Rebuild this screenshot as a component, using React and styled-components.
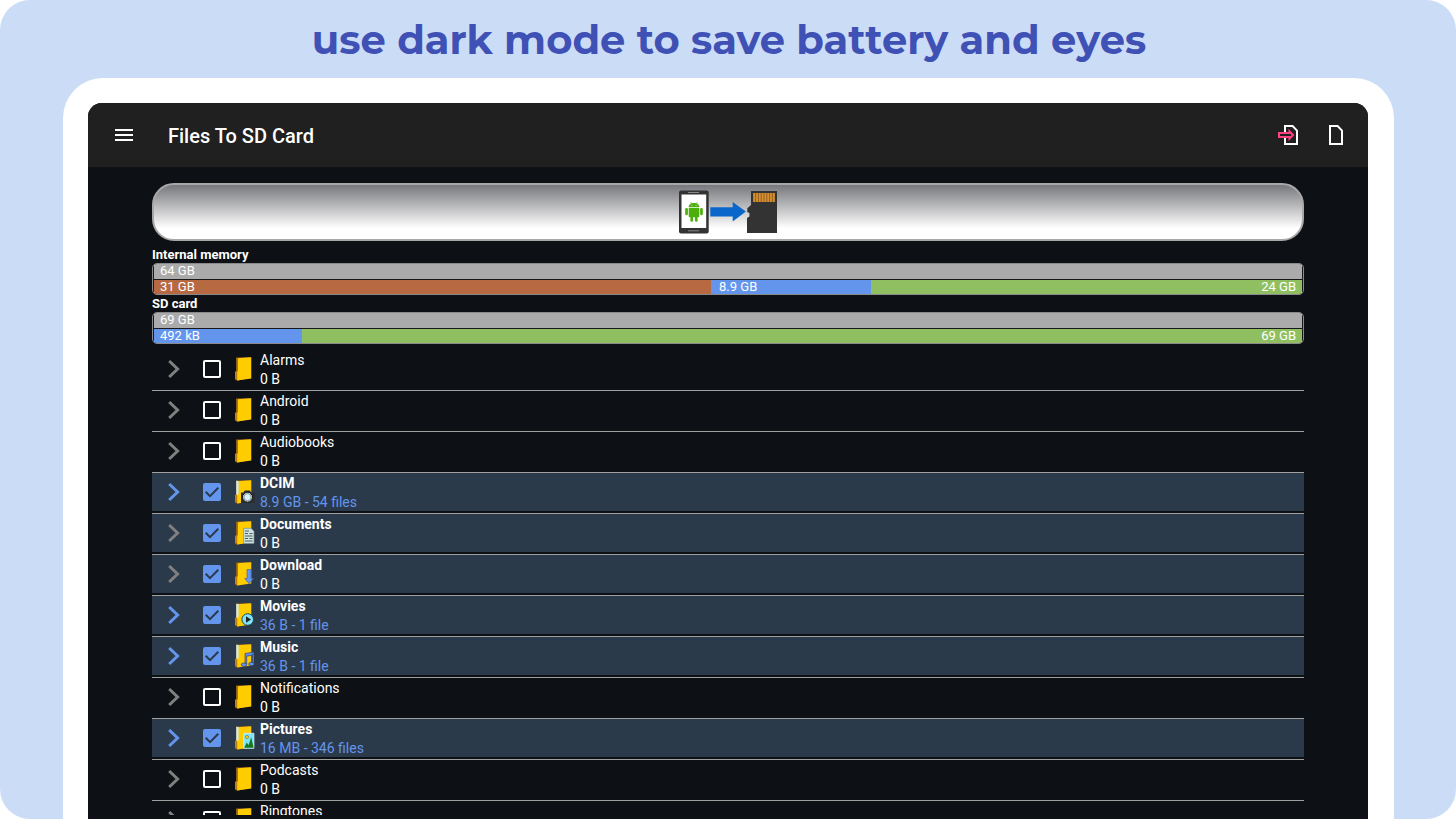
import { useState } from "react";
import styled, { createGlobalStyle } from "styled-components";

const GlobalStyle = createGlobalStyle`
  * {
    box-sizing: border-box;
  }

  body {
    margin: 0;
    background-color: white;
    font-family: Roboto, "Liberation Sans", sans-serif;
  }
`;

const Page = styled.div`
  display: flex;
  flex-direction: column;
  height: 100vh;
  overflow: hidden;
  border-radius: 30px;
  background-color: #cbdcf6;
`;

const Headline = styled.h1`
  display: flex;
  align-items: center;
  justify-content: center;
  flex: none;
  height: 78px;
  margin: 0;
  padding-left: 2px;
  color: #3f51b5;
  font-family: Montserrat, Inter, sans-serif;
  font-size: 40px;
  font-weight: 700;
  white-space: nowrap;
`;

const Tablet = styled.div`
  display: flex;
  flex: 1;
  min-height: 0;
  margin: 0 62px 0 63px;
  padding: 25px 26px 0 25px;
  border-radius: 40px 40px 0 0;
  background-color: white;
`;

const Screen = styled.div`
  display: flex;
  flex-direction: column;
  flex: 1;
  min-width: 0;
  padding-bottom: 4px;
  overflow: hidden;
  border-radius: 14px 14px 0 0;
  background-color: #0d1014;
  color: white;
`;

const AppBar = styled.header`
  display: flex;
  align-items: center;
  flex: none;
  height: 64px;
  padding: 0 20px 0 24px;
  background-color: #202020;
`;

const AppTitle = styled.h2`
  flex: 1;
  margin: 0 0 0 32px;
  padding-top: 2px;
  font-size: 20px;
  line-height: 24px;
  font-weight: 500;
`;

const Actions = styled.div`
  display: flex;
  gap: 24px;
`;

const IconButton = styled.button`
  display: flex;
  align-items: center;
  justify-content: center;
  padding: 0;
  border: none;
  background: none;
  color: ${({ $color }) => $color || "white"};
  cursor: pointer;
`;

const Content = styled.main`
  display: flex;
  flex-direction: column;
  flex: 1;
  min-height: 0;
  padding: 16px 64px 0;
`;

const TransferButton = styled.button`
  display: flex;
  align-items: center;
  justify-content: center;
  flex: none;
  height: 58px;
  margin-bottom: 6px;
  padding: 0;
  border: 2px solid #a8a8a8;
  border-radius: 22px;
  background: linear-gradient(#77787c, #ffffff 80%);
  cursor: pointer;
`;

const StorageLabel = styled.h3`
  flex: none;
  margin: 0;
  font-size: 13px;
  line-height: 16px;
  font-weight: 700;
`;

const Storage = styled.div`
  flex: none;
  height: 32px;
  margin-bottom: ${({ $last }) => ($last ? "6px" : "1px")};
  padding: 0 1px;
  overflow: hidden;
  border: 1px solid #8a8a8a;
  border-radius: 5px;
  background-color: #17181a;
`;

const StorageBar = styled.div`
  display: grid;
  grid-template-columns: ${({ $columns }) => $columns};
  height: 15px;
  font-size: 13px;
  line-height: 14px;

  & + & {
    margin-top: 1px;
    height: 14px;
  }
`;

const Segment = styled.div`
  padding: 0 6px;
  background-color: ${({ $color }) => $color};
  text-align: ${({ $end }) => ($end ? "right" : "left")};

  & + & {
    padding-left: 8px;
  }
`;

const FileList = styled.ul`
  flex: 1;
  min-height: 0;
  margin: 0;
  padding: 0;
  overflow: hidden;
  list-style: none;
`;

const FileRow = styled.li`
  padding-bottom: 2px;
  border-bottom: 1px solid #a0a0a0;
`;

const FileRowBody = styled.div`
  display: grid;
  grid-template-columns: 44px 32px 32px 1fr;
  grid-template-rows: 38px;
  align-items: center;
  justify-items: center;
  background-color: ${({ $selected }) => ($selected ? "#2b3a4b" : "transparent")};
`;

const CheckboxWrap = styled.span`
  display: grid;
  place-items: center;

  > * {
    grid-area: 1 / 1;
  }
`;

const Checkbox = styled.input`
  appearance: none;
  width: 18px;
  height: 18px;
  margin: 0;
  border: 2px solid white;
  border-radius: 2px;
  cursor: pointer;

  &:checked {
    border-color: #6495ed;
    background-color: #6495ed;
  }
`;

const CheckMark = styled.svg`
  pointer-events: none;
`;

const FileLabel = styled.label`
  justify-self: start;
  align-self: start;
  padding-top: 1px;
  font-size: 14px;
  line-height: 19px;
  cursor: pointer;
`;

const FileName = styled.span`
  display: block;
  font-weight: ${({ $selected }) => ($selected ? 700 : 400)};
`;

const FileInfo = styled.span`
  display: block;
  color: ${({ $filled }) => ($filled ? "#6495ed" : "white")};
`;

const storages = [
  {
    label: "Internal memory",
    total: "64 GB",
    columns: "558fr 160fr 432fr",
    parts: [
      { text: "31 GB", color: "#b76a42" },
      { text: "8.9 GB", color: "#6495ed" },
      { text: "24 GB", color: "#8fbf61", end: true },
    ],
  },
  {
    label: "SD card",
    total: "69 GB",
    columns: "148fr 1002fr",
    parts: [
      { text: "492 kB", color: "#6495ed" },
      { text: "69 GB", color: "#8fbf61", end: true },
    ],
  },
];

const folders = [
  { name: "Alarms", info: "0 B" },
  { name: "Android", info: "0 B" },
  { name: "Audiobooks", info: "0 B" },
  { name: "DCIM", info: "8.9 GB - 54 files", selected: true, filled: true },
  { name: "Documents", info: "0 B", selected: true },
  { name: "Download", info: "0 B", selected: true },
  { name: "Movies", info: "36 B - 1 file", selected: true, filled: true },
  { name: "Music", info: "36 B - 1 file", selected: true, filled: true },
  { name: "Notifications", info: "0 B" },
  { name: "Pictures", info: "16 MB - 346 files", selected: true, filled: true },
  { name: "Podcasts", info: "0 B" },
  { name: "Ringtones", info: "0 B" },
];

const MenuIcon = () => (
  <svg width="24" height="24" viewBox="0 0 24 24" fill="currentColor">
    <path d="M3 6h18v2H3zM3 11h18v2H3zM3 16h18v2H3z" />
  </svg>
);

const PageIcon = () => (
  <svg width="24" height="24" viewBox="0 0 24 24" fill="none" stroke="currentColor" strokeWidth="2">
    <path d="M6 3h7.6L18 7.6V21H6z" />
  </svg>
);

const ImportIcon = () => (
  <svg width="24" height="24" viewBox="0 0 24 24" fill="none" stroke="currentColor" strokeWidth="2">
    <path d="M9 9V3h7.6L21 7.6V21H9v-6" />
    <path d="M3 10h10.5V8.2L17 12l-3.5 3.8V14H3z" fill="#202020" stroke="#ff4081" />
  </svg>
);

const ChevronIcon = () => (
  <svg width="24" height="24" viewBox="0 0 24 24" fill="none" stroke="currentColor" strokeWidth="3">
    <path d="M7.2 4L15.6 12l-8.4 8" />
  </svg>
);

const TransferIcon = () => (
  <svg width="98" height="44" viewBox="0 0 98 44">
    <rect x="0" y="0.5" width="29.7" height="43" rx="2" fill="#333" />
    <rect x="2.5" y="4.5" width="24.7" height="33.5" fill="#fff" />
    <path d="M9 2.5h11M9 40.8h11" stroke="#888" />
    <g fill="#4caf0a">
      <path d="M9.7 17c0-5.200 10.600-5.200 10.600 0z" />
      <path d="M9.7 17.8h10.6v8.4a1 1 0 0 1-1 1h-8.6a1 1 0 0 1-1-1z" />
      <rect x="6.2" y="18" width="2.7" height="7.2" rx="1.3" />
      <rect x="21.1" y="18" width="2.7" height="7.2" rx="1.3" />
      <rect x="11.4" y="25" width="2.7" height="6.8" rx="1.3" />
      <rect x="15.9" y="25" width="2.7" height="6.8" rx="1.3" />
      <path d="M11.6 12l1.2 2.2M18.4 12l-1.2 2.2" stroke="#4caf0a" strokeWidth="0.6" />
    </g>
    <path d="M12.5 15.4h0.8M16.7 15.4h0.8" stroke="#fff" strokeWidth="0.8" />
    <path d="M31.3 17.2h22.4V12l13.2 9.6-13.2 10v-5H31.3z" fill="#0b66cc" />
    <path d="M72 1h26v42H68V28l2.4-1.4V23L68.3 22v-3.7L72 15z" fill="#333" />
    <path d="M74 3h22v9H74z" fill="#94601f" />
    <path
      d="M75.2 3v9M78 3v9M80.8 3v9M83.6 3v9M86.4 3v9M89.2 3v9M92 3v9M94.8 3v9"
      stroke="#d68f33"
      strokeWidth="1.8"
    />
  </svg>
);

const badges = {
  DCIM: (
    <>
      <path d="M6 12.5h2.5l1.2-2H15l1.2 2H20V23H6z" fill="#2b2f33" />
      <circle cx="12.5" cy="17.2" r="5" fill="#cfeef5" stroke="#111" />
      <circle cx="12.5" cy="17.2" r="3.6" fill="#d8f3f8" stroke="#555" strokeWidth="0.6" />
    </>
  ),
  Documents: (
    <>
      <path d="M8.7 7.3H16l3 3v12.2H8.7z" fill="#cfe3e3" stroke="#6f8a88" strokeWidth="0.7" />
      <path d="M10 10h4M10 12.5h3M14.5 12.5h3M10 15h7.5M10 17.5h3M14.5 17.5h3M10 20h7.5" stroke="#4c5c5c" />
    </>
  ),
  Download: (
    <path d="M12 7.5h4v9h2.4L14 21.7l-4.3-5.2H12z" fill="#6496f5" stroke="#3c5c9c" strokeWidth="0.6" />
  ),
  Movies: (
    <>
      <circle cx="12.7" cy="16.5" r="5.8" fill="#80e4fa" stroke="#1c4856" />
      <path d="M11 13.3l5 3.2-5 3.2z" fill="#222" />
    </>
  ),
  Music: (
    <g stroke="#2c3550" strokeWidth="0.6" fill="#5f92f0">
      <path d="M10 9.5L19 8v3l-7.3 1.2v8H10z" />
      <path d="M17.3 10H19v10h-1.7z" />
      <ellipse cx="9" cy="20.7" rx="2.8" ry="1.8" />
      <ellipse cx="16.4" cy="20" rx="2.8" ry="1.8" />
    </g>
  ),
  Pictures: (
    <>
      <path d="M8.7 7.3h10.2v15H8.7z" fill="#80e4fa" stroke="#d4f4fa" strokeWidth="0.8" />
      <circle cx="12" cy="11" r="1.6" fill="#ffd000" stroke="#6b5a10" strokeWidth="0.5" />
      <path d="M9.2 21.8l2.6-5.2 1.7 2.6 2.7-8 2.4 10.6z" fill="#167a1c" />
    </>
  ),
};

const FolderIcon = ({ name, filled }) => (
  <svg width="22" height="24" viewBox="-2 0 22 24">
    <path d="M1 0.5L15.5 0l-1 21L2.2 23.8 0 22.5V15l1-1.3z" fill="#8f5f1c" />
    <path d="M2.8 1.2l13.5-0.9v21.3L2.2 23.6V15l0.6-1.2z" fill="#ffcc00" />
    {filled && <path d="M1.2 0.7l2.4 0.3v12.5l-1.3 2-1.1-1z" fill="#cdeaf2" />}
    <path d="M0.3 15.2l1.3-1v8.3l-1.3-0.5z" fill="#d9920f" />
    {badges[name]}
  </svg>
);

function StorageMeter({ storage, last }) {
  return (
    <>
      <StorageLabel>{storage.label}</StorageLabel>
      <Storage $last={last}>
        <StorageBar $columns="1fr">
          <Segment $color="#ababab">{storage.total}</Segment>
        </StorageBar>
        <StorageBar $columns={storage.columns}>
          {storage.parts.map((part) => (
            <Segment key={part.text} $color={part.color} $end={part.end}>
              {part.text}
            </Segment>
          ))}
        </StorageBar>
      </Storage>
    </>
  );
}

function Folder({ folder }) {
  const [selected, setSelected] = useState(Boolean(folder.selected));
  const id = `folder-${folder.name}`;

  return (
    <FileRow>
      <FileRowBody $selected={selected}>
        <IconButton $color={folder.filled ? "#6495ed" : "#808080"} aria-label={`Expand ${folder.name}`}>
          <ChevronIcon />
        </IconButton>
        <CheckboxWrap>
          <Checkbox
            id={id}
            type="checkbox"
            checked={selected}
            onChange={(e) => setSelected(e.target.checked)}
          />
          {selected && (
            <CheckMark width="18" height="18" viewBox="0 0 18 18" fill="none" stroke="#2b3a4b" strokeWidth="2">
              <path d="M2.7 8.8L7 13.100l8.300-8.400" />
            </CheckMark>
          )}
        </CheckboxWrap>
        <FolderIcon name={folder.name} filled={folder.filled} />
        <FileLabel htmlFor={id}>
          <FileName $selected={selected}>{folder.name}</FileName>
          <FileInfo $filled={folder.filled}>{folder.info}</FileInfo>
        </FileLabel>
      </FileRowBody>
    </FileRow>
  );
}

export default function App() {
  return (
    <>
      <GlobalStyle />
      <Page>
        <Headline>use dark mode to save battery and eyes</Headline>
        <Tablet>
          <Screen>
            <AppBar>
              <IconButton aria-label="Menu">
                <MenuIcon />
              </IconButton>
              <AppTitle>Files To SD Card</AppTitle>
              <Actions>
                <IconButton aria-label="Move files">
                  <ImportIcon />
                </IconButton>
                <IconButton aria-label="File">
                  <PageIcon />
                </IconButton>
              </Actions>
            </AppBar>
            <Content>
              <TransferButton aria-label="Transfer to SD card">
                <TransferIcon />
              </TransferButton>
              {storages.map((storage, i) => (
                <StorageMeter key={storage.label} storage={storage} last={i === storages.length - 1} />
              ))}
              <FileList>
                {folders.map((folder) => (
                  <Folder key={folder.name} folder={folder} />
                ))}
              </FileList>
            </Content>
          </Screen>
        </Tablet>
      </Page>
    </>
  );
}
